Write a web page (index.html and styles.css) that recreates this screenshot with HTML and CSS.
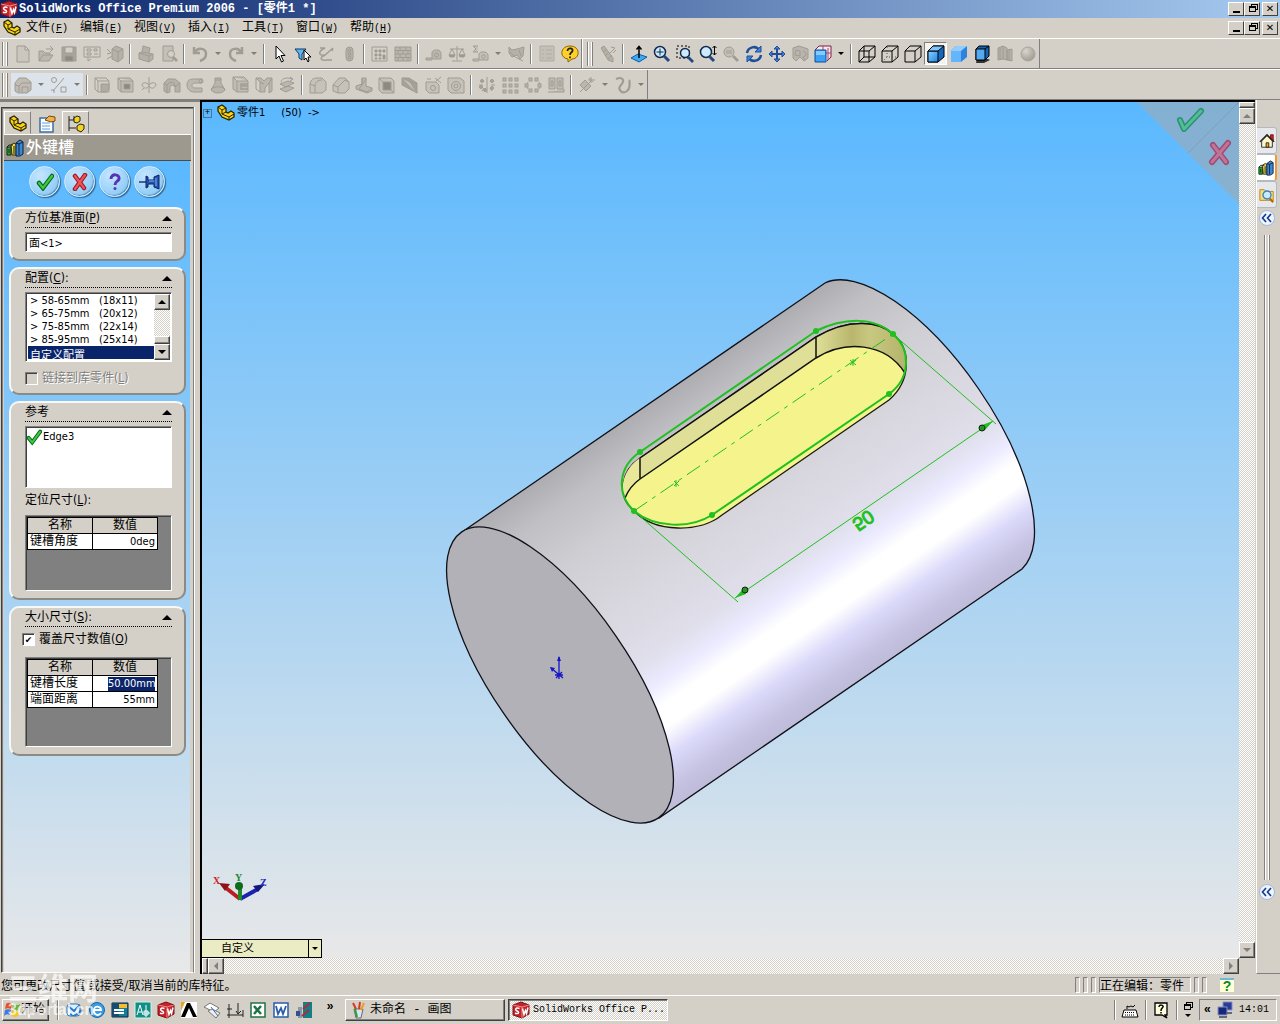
FILE: index.html
```html
<!DOCTYPE html>
<html lang="zh-CN">
<head>
    <meta charset="UTF-8">
    <meta name="viewport" content="width=device-width, initial-scale=1.0">
    <title>SolidWorks Office Premium 2006 - [零件1 *]</title>
    <link rel="stylesheet" href="styles.css">
</head>
<body>
    <svg class="sprite" aria-hidden="true">
        <defs>
            <linearGradient id="blueFace" x1="0" y1="0" x2="1" y2="1"><stop offset="0" stop-color="#8fd0ff"/><stop offset="1" stop-color="#1c86e8"/></linearGradient>
            <radialGradient id="ball" cx=".35" cy=".3" r=".8"><stop offset="0" stop-color="#d8d5cd"/><stop offset="1" stop-color="#9a968d"/></radialGradient>
        </defs>
        <!-- application -->
        <symbol id="sw" viewBox="0 0 18 18"><path d="M1 4l8-3 8 3v9l-7 4-9-3z" fill="#c3242b" stroke="#7d1014"/><path d="M1 4l9 2v11M10 6l7-2" stroke="#f08a8a"/><path d="M7.500 7.500c-4-1.500-5 1.500-2.500 2.500s2 3.500-2 2.200M10.500 7.500l1.500 6 1.500-4 1 3 1.500-6" stroke="#fff" stroke-width="1.500"/></symbol>
        <symbol id="part" viewBox="0 0 18 18"><path d="M1 3l4-2 4 3v4l2 1 3-2 3 2v4l-5 3-7-3-4-6z" fill="#f7d417" stroke="#2b2400" stroke-width="1.300"/><path d="M1 3l4 3v4l7 3v3M5 6l4-2M12 13l5-3M9 8l-4 2" stroke="#2b2400"/></symbol>
        <symbol id="books" viewBox="0 0 18 18"><path d="M1 8h4v8H1z" fill="#2fa83a" stroke="#08280b"/><path d="M5 6l3-2 2 1v11H6z" fill="#f2d544" stroke="#3a3000"/><path d="M10 4l4-3 3 2v12l-3 2h-4z" fill="#3d87d8" stroke="#06203f"/><path d="M1 8l2-2h4M3 10v4M8 7v8M13 5v11M10 4l3 1 4-2" stroke="#102030"/></symbol>
        <!-- standard toolbar -->
        <symbol id="new" viewBox="0 0 18 18"><path d="M3 1h8l4 4v12H3zM11 1v4h4" fill="#cbc7be"/></symbol>
        <symbol id="open" viewBox="0 0 18 18"><path d="M2 16V6h4l2 2h5v2M2 16l4-6h10l-4 6z" fill="#bbb7ae"/><path d="M9 4h6M13 1l3 3-3 3"/></symbol>
        <symbol id="save" viewBox="0 0 18 18"><path d="M2 2h14v14H2z" fill="#a9a59c"/><path d="M5 2h8v6H5z" fill="#d4d0c8"/><path d="M5 11h8v5H5z" fill="#8e8a82"/></symbol>
        <symbol id="drawing" viewBox="0 0 18 18"><path d="M1 2h16v10H1zM4 4h4v2H4zM4 8h4v2H4zM11 4h3v2h-3zM11 9h4M5 12v4l3-2"/></symbol>
        <symbol id="assembly" viewBox="0 0 18 18"><path d="M6 4l4-3 7 3v9l-5 4-6-3zM6 4l6 3v10M12 7l5-3" fill="#b5b1a8"/><path d="M1 4l4 4M1 9l4-1M1 14l5-3"/></symbol>
        <symbol id="print" viewBox="0 0 18 18"><path d="M5 7l1-6 7 2-1 5M2 8l3-1 11 2v5l-4 3-10-3z" fill="#b5b1a8"/><path d="M2 8l10 3v6M12 11l4-2"/></symbol>
        <symbol id="preview" viewBox="0 0 18 18"><path d="M3 1h10v15H3z" fill="#c4c0b7"/><circle cx="11" cy="9" r="3.500" fill="#d4d0c8"/><path d="M13 12l4 4" stroke-width="2.500"/></symbol>
        <symbol id="undo" viewBox="0 0 18 18"><path d="M3 2v6h6M4 7c3-5 11-4 11 2 0 4-3 6-6 7" stroke-width="2.500"/></symbol>
        <symbol id="redo" viewBox="0 0 18 18"><path d="M15 2v6H9M14 7C11 2 3 3 3 9c0 4 3 6 6 7" stroke-width="2.500"/></symbol>
        <symbol id="cursor" viewBox="0 0 18 18"><path d="M5 1v13l3-3 2.500 6 2-1-2.500-5.500h4z" fill="#fff" stroke="#000"/></symbol>
        <symbol id="filter" viewBox="0 0 18 18"><path d="M1 4h11L8 9v6l-3-2V9z" fill="#5bb8f2" stroke="#0c3766"/><path d="M10 5v10l2-2 2 4 1-1-1-4h3z" fill="#fff" stroke="#000"/></symbol>
        <symbol id="sketch" viewBox="0 0 18 18"><path d="M3 3h5c-8 4-6 8 0 7L16 3M8 10c-6 3-5 6 2 5h5M16 3l-1 3" stroke-width="1.400"/></symbol>
        <symbol id="traffic" viewBox="0 0 18 18"><rect x="6" y="2" width="7" height="14" rx="3.500" fill="#b5b1a8"/><circle cx="9.500" cy="5.500" r="1.300"/><circle cx="9.500" cy="9" r="1.300"/><circle cx="9.500" cy="12.500" r="1.300"/></symbol>
        <symbol id="grid" viewBox="0 0 18 18"><path d="M1 2h15v14H1z"/><path d="M4 5h2v2H4zM8 5h2v2H8zM12 5h2v2h-2zM4 9h2v2H4zM8 9h2v2H8zM4 13h2v1H4zM8 13h2v1H8zM12 10h2v4h-2z" fill="#9a968d"/></symbol>
        <symbol id="bricks" viewBox="0 0 18 18"><path d="M1 2h16v14H1z" fill="#bbb7ae"/><path d="M1 5.500h16M1 9h16M1 12.500h16M6 2v3M12 2v3M9 6v3M4 6v3M14 6v3M6 9v3M12 9v3M9 13v3M4 13v3M14 13v3"/></symbol>
        <symbol id="tape" viewBox="0 0 18 18"><path d="M7 14V8c0-3 3-3 5-3 3 0 4 2 4 4v5zM7 13H1v2h6" fill="#bbb7ae"/><circle cx="11.500" cy="10" r="2"/></symbol>
        <symbol id="balance" viewBox="0 0 18 18"><path d="M9 1v14M4 16h10M2 4h14M4 4l-3 6h6zM14 4l-3 6h6z"/><path d="M1 10h6l-1 2H2zM11 10h6l-1 2h-4z" fill="#9a968d"/></symbol>
        <symbol id="sigma" viewBox="0 0 18 18"><path d="M7 1H2l3 3-3 3h5M8 15V9c1-3 8-3 9 1v5zM8 14H2v2h6" fill="#c4c0b7"/><circle cx="12.500" cy="11.500" r="1.800"/></symbol>
        <symbol id="check" viewBox="0 0 18 18"><path d="M2 2l3 3 5-1 7-2-1 9-3 3-3-4-5 2-3-4z" fill="#b5b1a8"/><path d="M3 7l5 5 8 4M12 5l2 6"/></symbol>
        <symbol id="list" viewBox="0 0 18 18"><path d="M2 1h14v15H2z" fill="#c4c0b7" stroke="#b0aca3"/><path d="M4 5h2M8 5h6M4 9h2M8 9h6M4 13h2M8 13h6" stroke="#b0aca3"/></symbol>
        <symbol id="help" viewBox="0 0 18 18"><path d="M9 1c11 0 10 13 2 13l-4 3v-3C-2 13-1 1 9 1z" fill="#ffd028" stroke="#8c6400"/><path d="M6.500 6c0-4 6-3 5 0-1 2-2.500 1.500-2.500 4M9 11.500v1.800" stroke="#222" stroke-width="1.800"/></symbol>
        <!-- view toolbar -->
        <symbol id="screw" viewBox="0 0 18 18"><path d="M2 3l3-2 9 12v4l-5-2zM10 9l6-6M12 2l4 1M14 8l3-3" fill="#b5b1a8"/><path d="M4 7l4-3M6 11l4-4M9 14l4-4"/></symbol>
        <symbol id="normal" viewBox="0 0 18 18"><path d="M1 13l7-4 9 3-8 5z" fill="#3ca9f5" stroke="#0d5fa8"/><path d="M9 13V2M6.500 4.500L9 1.500l2.500 3" stroke="#000" stroke-width="1.500"/></symbol>
        <symbol id="zoomfit" viewBox="0 0 18 18"><circle cx="7" cy="7" r="5.500" fill="#cdeaff" stroke="#102a4c" stroke-width="1.500"/><path d="M7 3.500v7M3.500 7h7" stroke="#102a4c"/><path d="M11 11l5 5" stroke="#24497c" stroke-width="3"/></symbol>
        <symbol id="zoomarea" viewBox="0 0 18 18"><path d="M1 1h12v12H1z" stroke="#000" stroke-dasharray="2 2"/><circle cx="9" cy="8" r="4.500" fill="#cdeaff" stroke="#102a4c" stroke-width="1.500"/><path d="M12 12l5 5" stroke="#24497c" stroke-width="2.800"/></symbol>
        <symbol id="zoominout" viewBox="0 0 18 18"><circle cx="7" cy="7" r="5.500" fill="#cdeaff" stroke="#102a4c" stroke-width="1.500"/><path d="M10 11l5 5" stroke="#24497c" stroke-width="3"/><path d="M15.500 1v9M13.500 3l2-2 2 2M13.500 8l2 2 2-2" stroke="#000"/></symbol>
        <symbol id="zoomsel" viewBox="0 0 18 18"><circle cx="7" cy="7" r="5" fill="#c4c0b7"/><path d="M4 6h6M4 8h6"/><path d="M11 11l5 5" stroke-width="2.800"/></symbol>
        <symbol id="rotate" viewBox="0 0 18 18"><path d="M2 8c1-6 9-8 12-3M16 10c-1 6-9 8-12 3" stroke="#1f4f9a" stroke-width="2.500"/><path d="M16 1v6h-6zM2 17v-6h6z" fill="#3f83d8" stroke="#1f4f9a"/></symbol>
        <symbol id="pan" viewBox="0 0 18 18"><path d="M9 2v14M2 9h14" stroke="#1f4f9a" stroke-width="2"/><path d="M6 4l3-3 3 3zM6 14l3 3 3-3zM4 6L1 9l3 3zM14 6l3 3-3 3z" fill="#3f83d8" stroke="#1f4f9a"/></symbol>
        <symbol id="roll" viewBox="0 0 18 18"><path d="M2 3l6-2 9 3v9l-4 3-4-4-4 4-3-3z" fill="#b9b5ac"/><path d="M5 5l4 1v5l-5-1zM12 6c4 1 4 5 0 6l2 3"/></symbol>
        <symbol id="views" viewBox="0 0 18 18"><path d="M1 5l4-4h12v11l-4 4" fill="#f5e9ef" stroke="#7a2040"/><path d="M9 1v4M14 3v12M12 8h5" stroke="#b0406a"/><path d="M1 5h11v12H1z" fill="#3aa2f8" stroke="#0c4f94"/><path d="M2 6h9v4H2z" fill="#86cbff" stroke="none"/></symbol>
        <symbol id="wire" viewBox="0 0 18 18"><path d="M1 6h10v11H1zM6 1h11v11H6zM1 6l5-5M11 6l6-5M1 17l5-5M11 17l6-5" stroke="#000"/></symbol>
        <symbol id="hidvis" viewBox="0 0 18 18"><path d="M1 6h10v11H1zM1 6l5-5h11v11l-6 5M11 6l6-5" stroke="#000"/><path d="M6 2v10h10M6 12l-5 5" stroke="#555" stroke-dasharray="1 2"/></symbol>
        <symbol id="hidrem" viewBox="0 0 18 18"><path d="M1 6h10v11H1zM1 6l5-5h11v11l-6 5M11 6l6-5" stroke="#000"/></symbol>
        <symbol id="shadedge" viewBox="0 0 18 18"><path d="M1 6l5-5h11v11l-6 5H1z" fill="#1668bd" stroke="#000"/><path d="M1 6h10v11H1z" fill="url(#blueFace)" stroke="#000"/><path d="M1 6l5-5h11l-6 5z" fill="#7cc5ff" stroke="#000"/></symbol>
        <symbol id="shaded" viewBox="0 0 18 18"><path d="M1 6l5-5h11v11l-6 5H1z" fill="#2f83dd" stroke="none"/><path d="M1 6h10v11H1z" fill="#63b6fb" stroke="none"/><path d="M1 6l5-5h11l-6 5z" fill="#8fceff" stroke="none"/></symbol>
        <symbol id="shadow" viewBox="0 0 18 18"><path d="M4 14h11l2 1-6 3H3z" fill="#333" stroke="none"/><path d="M3 4l3-3h10v10l-4 4H3z" fill="#1763b4" stroke="#000"/><path d="M3 4h9v11H3zM12 4l4-3" fill="#55a9f2" stroke="#000"/></symbol>
        <symbol id="section" viewBox="0 0 18 18"><path d="M2 3l5-2v13l-5 1zM7 1l4 2v12l-4-1M11 5l5-1v12l-5-1z" fill="#b5b1a8"/><path d="M4 3v11M13 5v10"/></symbol>
        <symbol id="sphere" viewBox="0 0 18 18"><circle cx="9" cy="9" r="7" fill="url(#ball)" stroke="#aaa69d"/></symbol>
        <!-- features toolbar -->
        <symbol id="boss" viewBox="0 0 18 18"><path d="M1 15V7l4-5h7l5 4v8l-4 3H4z" fill="#c0bcb3"/><path d="M5 16v-6l3-3h9M8 16v-5h6v5M5 10l-4-1"/></symbol>
        <symbol id="curveline" viewBox="0 0 18 18"><circle cx="4" cy="4" r="2.500"/><path d="M3 15L14 2M1 14h3v3M11 11h5v5h-5z"/></symbol>
        <symbol id="extrude" viewBox="0 0 18 18"><path d="M1 2h11l3 3v11H4l-3-3zM1 2l3 3h11M4 5v11"/><path d="M7 8h8v5l-3 3H7z" fill="#b0aca3"/></symbol>
        <symbol id="cut" viewBox="0 0 18 18"><path d="M1 2h12l3 3v11H4l-3-3zM1 2l3 3h12M4 5v11" fill="#c0bcb3"/><path d="M7 8h6v5H7z" fill="#8e8a82"/></symbol>
        <symbol id="revolve" viewBox="0 0 18 18"><path d="M9 1v16M2 9c0-3 5-3 7 0 2-3 7-3 7 0M2 9c2 4 5 4 7 1 2 3 5 3 7-1M4 12l-2 2"/></symbol>
        <symbol id="sweep" viewBox="0 0 18 18"><path d="M1 7l4-4h7l5 4v9h-5v-5c-1-2-4-2-5 0v5l-3 1-3-2z" fill="#b5b1a8"/><path d="M1 7l3 2v8M4 9c3-4 8-4 8 2M12 11l5-4"/></symbol>
        <symbol id="cshape" viewBox="0 0 18 18"><path d="M16 3H8C2 3 1 6 1 9s2 7 7 7h8v-4H9c-4 0-4-5 0-5h7z" fill="#bdb9b0"/><circle cx="15" cy="5" r="2"/></symbol>
        <symbol id="loft" viewBox="0 0 18 18"><path d="M6 2h6v5l4 7c-3 4-11 4-14 0l4-7z" fill="#b9b5ac"/><path d="M6 4h6M2 13c4-3 10-3 14 0"/></symbol>
        <symbol id="slab" viewBox="0 0 18 18"><path d="M1 1h11l4 4v11H5l-4-3zM1 1l4 4h11M5 5v11" fill="#c0bcb3"/><path d="M16 8H9v2h7M16 13H9v-2" stroke-width="1.500"/></symbol>
        <symbol id="rib" viewBox="0 0 18 18"><path d="M1 2h5l3 3 3-3h5v13l-3 2V7l-4 5v4H5V6L1 2z" fill="#bbb7ae"/><path d="M5 6l4 2M14 7l3-5M1 2v11l4 3"/></symbol>
        <symbol id="swap" viewBox="0 0 18 18"><path d="M2 8l8-3 6 2-8 4zM2 13l8-3 6 2-8 4z" fill="#bbb7ae"/><path d="M3 6c1-4 6-5 11-3M12 1l3 2-3 2"/></symbol>
        <symbol id="fillet" viewBox="0 0 18 18"><path d="M1 8c1-5 4-6 7-6h5l4 4v8l-4 3H1z" fill="#c6c2b9"/><path d="M1 8l5 2v7M6 10c0-4 3-6 7-6"/></symbol>
        <symbol id="chamfer" viewBox="0 0 18 18"><path d="M1 9l6-7h6l4 4v7l-4 4H6l-5-2z" fill="#c6c2b9"/><path d="M6 17v-6l7-7M1 9l5 2M13 4l4 2"/></symbol>
        <symbol id="ribs" viewBox="0 0 18 18"><path d="M7 2h4v8l6 2v3l-5 2-11-4v-3l6-2z" fill="#bbb7ae"/><path d="M11 3L4 13l8 3 5-4M7 2v7"/></symbol>
        <symbol id="shell" viewBox="0 0 18 18"><path d="M1 2h12l3 3v12H4l-3-3z" fill="#c6c2b9"/><path d="M5 6h8v8H5z" fill="#8e8a82"/><path d="M1 2l4 4M16 17l-3-3"/></symbol>
        <symbol id="draft" viewBox="0 0 18 18"><path d="M1 2h7l8 5v10L1 9z" fill="#a5a198"/><path d="M1 2l8 4 7 11M9 6l7 1" fill="#c6c2b9"/></symbol>
        <symbol id="wizard" viewBox="0 0 18 18"><path d="M2 6h10l3 3v8H5l-3-3z" fill="#c6c2b9"/><circle cx="9" cy="12" r="2.500"/><path d="M11 2l6 5M17 1l-5 4M3 3h4"/></symbol>
        <symbol id="hole" viewBox="0 0 18 18"><path d="M1 2h12l4 3v12H4l-3-3z" fill="#c6c2b9"/><circle cx="9" cy="10" r="4.500"/><circle cx="9" cy="10" r="2"/></symbol>
        <symbol id="circpat" viewBox="0 0 18 18"><path d="M9 1v16M1 9h4M13 9h4M4 3l2 3M14 3l-2 3M4 15l2-3M14 15l-2-3"/><g fill="#aaa69d"><circle cx="4" cy="5" r="1.500"/><circle cx="14" cy="5" r="1.500"/><circle cx="3" cy="11" r="1.500"/><circle cx="14" cy="12" r="1.500"/><circle cx="7" cy="14" r="1.500"/></g></symbol>
        <symbol id="linpat" viewBox="0 0 18 18"><g fill="#bbb7ae"><rect x="2" y="2" width="3" height="3"/><rect x="8" y="2" width="3" height="3"/><rect x="14" y="2" width="3" height="3"/><rect x="2" y="8" width="3" height="3"/><rect x="8" y="8" width="3" height="3"/><rect x="14" y="8" width="3" height="3"/><rect x="2" y="14" width="3" height="3"/><rect x="8" y="14" width="3" height="3"/><rect x="14" y="14" width="3" height="3"/></g></symbol>
        <symbol id="ringpat" viewBox="0 0 18 18"><g fill="#bbb7ae"><rect x="5" y="2" width="3" height="3"/><rect x="11" y="2" width="3" height="3"/><rect x="14" y="8" width="3" height="3"/><rect x="11" y="13" width="3" height="3"/><rect x="5" y="13" width="3" height="3"/><rect x="1" y="8" width="3" height="3"/></g><path d="M4 6l-1 2M15 6l1 2M4 13l-1-2M15 13l1-2"/></symbol>
        <symbol id="mirror" viewBox="0 0 18 18"><path d="M2 2h6v11H2zM10 2h6v11h-6zM1 16h16v-3" fill="#c0bcb3"/><path d="M4 5h2v5H4zM12 5h2v5h-2z"/></symbol>
        <symbol id="refgeo" viewBox="0 0 18 18"><path d="M2 9l5-5 6 6-5 5zM2 16L14 4M13 1v6M10 4h7M11 2l4 4" fill="#bbb7ae"/></symbol>
        <symbol id="curve" viewBox="0 0 18 18"><path d="M2 3c7-3 9 2 5 6s1 10 6 6 1-9 3-11" stroke-width="2.200"/></symbol>
        <!-- panels -->
        <symbol id="props" viewBox="0 0 18 18"><path d="M2 3h13v14H2z" fill="#fff" stroke="#3b6ea8" stroke-width="1.500"/><path d="M4 8h8M4 11h8M4 14h8" stroke="#5aa0e0"/><path d="M7 5l4-4 6 1v4l-4 1z" fill="#f0b04a" stroke="#7a4a10"/></symbol>
        <symbol id="config" viewBox="0 0 18 18"><path d="M2 1v15M2 5h5M2 13h7M7 1v4" stroke="#222"/><path d="M7 3l3-2 3 1v4l-3 2-3-1zM10 11l3-2 4 1v4l-3 3-4-2z" fill="#f7d417" stroke="#222"/></symbol>
        <symbol id="ok" viewBox="0 0 18 18"><path d="M3 10l4 5 9-12" stroke="#08661b" stroke-width="4.500" stroke-linecap="round"/><path d="M3 10l4 5 9-12" stroke="#3ecb42" stroke-width="2.200" stroke-linecap="round"/></symbol>
        <symbol id="cancel" viewBox="0 0 18 18"><path d="M4 3l9 12M14 2L4 16" stroke="#9a1a22" stroke-width="4.500" stroke-linecap="round"/><path d="M4 3l9 12M14 2L4 16" stroke="#f0525a" stroke-width="2.200" stroke-linecap="round"/></symbol>
        <symbol id="what" viewBox="0 0 18 18"><path d="M5 6c0-6 9-5 8 0-1 3-4 2-4 6" stroke="#5733b5" stroke-width="3"/><circle cx="9" cy="15.500" r="1.500" fill="#5733b5" stroke="none"/></symbol>
        <symbol id="pin" viewBox="0 0 22 18"><path d="M0 9h8" stroke="#163a78" stroke-width="1.500"/><path d="M7 3l2 1v3h6V4l5-2v14l-5-2v-3H9v3l-2 1z" fill="#2454b4" stroke="#0d2460"/><path d="M10 8h5M17 5v8" stroke="#7fb0f0"/></symbol>
        <symbol id="home" viewBox="0 0 18 18"><path d="M13 7V2h3v8" fill="#d22" stroke="#711"/><path d="M3 9v7h12V9L9 3z" fill="#fff6c8" stroke="#222"/><path d="M1 10l8-8 8 8" stroke="#222" stroke-width="1.500"/><path d="M8 11h3v5H8z" fill="#e9a520" stroke="#222"/></symbol>
        <symbol id="search" viewBox="0 0 18 18"><path d="M1 3h5l2 2h8v10H1z" fill="#f8dc7a" stroke="#b08410"/><circle cx="9" cy="9" r="4.500" fill="#c8ebff" stroke="#3d7fc4" stroke-width="1.500"/><path d="M12 13l4 4" stroke="#b06a10" stroke-width="2.500"/></symbol>
        <symbol id="chevrons" viewBox="0 0 18 18"><circle cx="9" cy="9" r="7.500" fill="#edf4ff" stroke="#a5b9d8"/><path d="M8 5L4.500 9 8 13M13 5L9.500 9l3.500 4" stroke="#123a8c" stroke-width="1.600"/></symbol>
        <!-- taskbar -->
        <symbol id="flag" viewBox="0 0 18 18"><path d="M3 3c2-2 4-1 6 0L8 8C6 7 4 7 2 8z" fill="#e8502a" stroke="none"/><path d="M10 3c2 1 4 2 7 0l-1 6c-3 1-5 0-7-1z" fill="#6cb83a" stroke="none"/><path d="M2 9c2-1 4-1 6 0l-1 5c-2-1-4-1-6 1z" fill="#3a7be0" stroke="none"/><path d="M9 9c2 1 4 2 7 1l-1 5c-3 2-5 1-7-1z" fill="#f5c426" stroke="none"/></symbol>
        <symbol id="mail" viewBox="0 0 18 18"><rect x="2" y="3" width="13" height="12" rx="3" fill="#dceeff" stroke="#2876c4"/><path d="M3 5l6 5 6-6M5 13c4 3 9 0 11-4" stroke="#2876c4" stroke-width="2"/></symbol>
        <symbol id="ie" viewBox="0 0 18 18"><circle cx="9" cy="9" r="7.500" fill="#3a9be0" stroke="#1568ae"/><path d="M13 12c-3 4-8 1-7-3 0-5 7-4 7 0H6" stroke="#fff" stroke-width="1.800"/></symbol>
        <symbol id="media" viewBox="0 0 18 18"><path d="M1 2h16v14H1z" fill="#177d9a" stroke="#124"/><path d="M1 2h7v14H1z" fill="#174c72" stroke="none"/><path d="M8 3h8v4H8z" fill="#f4bd31" stroke="none"/><path d="M3 9h10M3 12h10" stroke="#fff" stroke-width="1.800"/></symbol>
        <symbol id="caxa" viewBox="0 0 18 18"><path d="M1 1h16v16H1z" fill="#0e8f88" stroke="#d8f0ee"/><path d="M3 14l3-10 3 10M4 11h4M10 10h4v4h-4zM12 4v12M10 12h6" stroke="#fff"/></symbol>
        <symbol id="lambda" viewBox="0 0 18 18"><path d="M1 1h16v16H1z" fill="#fff" stroke="none"/><path d="M1 16L7 2h3l7 14h-4L9 7l-4 9z" fill="#000" stroke="none"/><path d="M1 10L5 1H1z" fill="#e9a520" stroke="none"/></symbol>
        <symbol id="pages" viewBox="0 0 18 18"><path d="M1 6l6-4 9 5-5 4z" fill="#fff" stroke="#777"/><path d="M5 10l4-2 8 4-4 5z" fill="#eee" stroke="#777"/><path d="M8 6l7 9" stroke="#2876c4"/></symbol>
        <symbol id="measure" viewBox="0 0 18 18"><path d="M3 3v14M1 8h5M1 14h16M12 2v10M10 10l2 3 3-3M17 9v7" stroke="#222"/></symbol>
        <symbol id="excel" viewBox="0 0 18 18"><path d="M2 2h14v14H2z" fill="#fff" stroke="#207245" stroke-width="1.500"/><path d="M5 5l7 8M12 5l-7 8" stroke="#207245" stroke-width="2.500"/></symbol>
        <symbol id="word" viewBox="0 0 18 18"><path d="M2 2h14v14H2z" fill="#fff" stroke="#2a5caa" stroke-width="1.500"/><path d="M4 5l2 8 3-6 2 6 3-8" stroke="#2a5caa" stroke-width="1.800"/></symbol>
        <symbol id="tower" viewBox="0 0 18 18"><path d="M3 6h4v11H3z" fill="#8b97a8" stroke="none"/><path d="M8 1h9v16H8z" fill="#147d85" stroke="none"/><path d="M1 10h4v5H1z" fill="#31528c" stroke="none"/><path d="M8 8l7-6M7 15l7-6" stroke="#b02a3a" stroke-width="2"/></symbol>
        <symbol id="paint" viewBox="0 0 18 18"><path d="M5 8h9l-2 9H7z" fill="#d9e4ec" stroke="#667"/><path d="M7 8L4 2M10 8l1-7" stroke="#d43a22" stroke-width="2"/><path d="M12 9l3-7" stroke="#e8a020" stroke-width="2"/><path d="M8 16l-2-8" stroke="#2da13a" stroke-width="2"/></symbol>
        <symbol id="keyboard" viewBox="0 0 18 18"><path d="M3 9h12l2 7H1z" fill="#fff" stroke="#000"/><path d="M4 11.500h10M4 14h10" stroke="#000" stroke-dasharray="1 1"/><path d="M6 8V5l2 1 2-1 2 1 2-2" stroke="#000"/></symbol>
        <symbol id="note" viewBox="0 0 18 18"><path d="M3 2h12v12h-2l2 3-5-3H3z" fill="#ffffdc" stroke="#000" stroke-width="1.300"/><path d="M7 6c0-3 5-2 4 0-1 2-2 1-2 4M9 11v1.500" stroke="#000" stroke-width="1.500"/></symbol>
        <symbol id="network" viewBox="0 0 18 18"><path d="M7 1h9v8H7z" fill="#2a3c98" stroke="#8290c0"/><path d="M2 6h9v8H2z" fill="#16287c" stroke="#8290c0"/><path d="M3 16h8M11 12h5" stroke="#667" stroke-width="2"/></symbol>
    </svg>

    <header class="title-bar">
        <svg class="icon"><use href="#sw"/></svg>
        <h1>SolidWorks Office Premium 2006 - [零件1 *]</h1>
        <div class="window-buttons">
            <button aria-label="最小化"><i class="glyph-min"></i></button>
            <button aria-label="还原"><i class="glyph-restore"></i></button>
            <button class="close" aria-label="关闭"><i class="glyph-close">✕</i></button>
        </div>
    </header>

    <nav class="menu-bar">
        <svg class="icon"><use href="#part"/></svg>
        <button>文件<span>(<u>F</u>)</span></button>
        <button>编辑<span>(<u>E</u>)</span></button>
        <button>视图<span>(<u>V</u>)</span></button>
        <button>插入<span>(<u>I</u>)</span></button>
        <button>工具<span>(<u>T</u>)</span></button>
        <button>窗口<span>(<u>W</u>)</span></button>
        <button>帮助<span>(<u>H</u>)</span></button>
        <div class="window-buttons">
            <button aria-label="最小化文档"><i class="glyph-min"></i></button>
            <button aria-label="还原文档"><i class="glyph-restore"></i></button>
            <button class="close" aria-label="关闭文档"><i class="glyph-close">✕</i></button>
        </div>
    </nav>

    <div class="toolbar-row">
        <div class="toolbar">
            <i class="grip"></i>
            <button class="tool" aria-label="新建"><svg class="icon"><use href="#new"/></svg></button>
            <button class="tool" aria-label="打开"><svg class="icon"><use href="#open"/></svg></button>
            <button class="tool" aria-label="保存"><svg class="icon"><use href="#save"/></svg></button>
            <button class="tool" aria-label="工程图"><svg class="icon"><use href="#drawing"/></svg></button>
            <button class="tool" aria-label="装配体"><svg class="icon"><use href="#assembly"/></svg></button>
            <i class="sep"></i>
            <button class="tool" aria-label="打印"><svg class="icon"><use href="#print"/></svg></button>
            <button class="tool" aria-label="打印预览"><svg class="icon"><use href="#preview"/></svg></button>
            <i class="sep"></i>
            <button class="tool" aria-label="撤销"><svg class="icon"><use href="#undo"/></svg></button>
            <button class="drop" aria-label="撤销列表"></button>
            <button class="tool" aria-label="重做"><svg class="icon"><use href="#redo"/></svg></button>
            <button class="drop" aria-label="重做列表"></button>
            <i class="sep"></i>
            <button class="tool" aria-label="选择"><svg class="icon"><use href="#cursor"/></svg></button>
            <button class="tool" aria-label="选择过滤器"><svg class="icon"><use href="#filter"/></svg></button>
            <button class="tool" aria-label="草图"><svg class="icon"><use href="#sketch"/></svg></button>
            <button class="tool" aria-label="重建模型"><svg class="icon"><use href="#traffic"/></svg></button>
            <i class="sep"></i>
            <button class="tool" aria-label="网格"><svg class="icon"><use href="#grid"/></svg></button>
            <button class="tool" aria-label="纹理"><svg class="icon"><use href="#bricks"/></svg></button>
            <i class="sep"></i>
            <button class="tool" aria-label="测量"><svg class="icon"><use href="#tape"/></svg></button>
            <button class="tool" aria-label="质量特性"><svg class="icon"><use href="#balance"/></svg></button>
            <button class="tool" aria-label="方程式"><svg class="icon"><use href="#sigma"/></svg></button>
            <button class="drop" aria-label="更多"></button>
            <button class="tool" aria-label="检查"><svg class="icon"><use href="#check"/></svg></button>
            <i class="sep"></i>
            <button class="tool" aria-label="选项"><svg class="icon"><use href="#list"/></svg></button>
            <button class="tool" aria-label="帮助"><svg class="icon"><use href="#help"/></svg></button>
        </div>
        <div class="toolbar">
            <i class="grip"></i>
            <button class="tool" aria-label="上一视图"><svg class="icon"><use href="#screw"/></svg></button>
            <i class="sep"></i>
            <button class="tool" aria-label="正视于"><svg class="icon"><use href="#normal"/></svg></button>
            <button class="tool" aria-label="整屏显示全图"><svg class="icon"><use href="#zoomfit"/></svg></button>
            <button class="tool" aria-label="局部放大"><svg class="icon"><use href="#zoomarea"/></svg></button>
            <button class="tool" aria-label="放大或缩小"><svg class="icon"><use href="#zoominout"/></svg></button>
            <button class="tool" aria-label="放大所选范围"><svg class="icon"><use href="#zoomsel"/></svg></button>
            <button class="tool" aria-label="旋转视图"><svg class="icon"><use href="#rotate"/></svg></button>
            <button class="tool" aria-label="平移"><svg class="icon"><use href="#pan"/></svg></button>
            <button class="tool" aria-label="翻滚"><svg class="icon"><use href="#roll"/></svg></button>
            <button class="tool" aria-label="标准视图"><svg class="icon"><use href="#views"/></svg></button>
            <button class="drop dark" aria-label="标准视图列表"></button>
            <i class="sep"></i>
            <button class="tool" aria-label="线架图"><svg class="icon"><use href="#wire"/></svg></button>
            <button class="tool" aria-label="隐藏线可见"><svg class="icon"><use href="#hidvis"/></svg></button>
            <button class="tool" aria-label="消除隐藏线"><svg class="icon"><use href="#hidrem"/></svg></button>
            <button class="tool pressed" aria-label="带边线上色"><svg class="icon"><use href="#shadedge"/></svg></button>
            <button class="tool" aria-label="上色"><svg class="icon"><use href="#shaded"/></svg></button>
            <button class="tool" aria-label="阴影"><svg class="icon"><use href="#shadow"/></svg></button>
            <button class="tool" aria-label="剖面视图"><svg class="icon"><use href="#section"/></svg></button>
            <button class="tool" aria-label="真实视图"><svg class="icon"><use href="#sphere"/></svg></button>
        </div>
    </div>

    <div class="toolbar-row">
        <div class="toolbar">
            <i class="grip"></i>
            <div class="tool-group">
                <button class="tool" aria-label="特征"><svg class="icon"><use href="#boss"/></svg></button>
                <button class="drop" aria-label="特征列表"></button>
                <button class="tool" aria-label="草图工具"><svg class="icon"><use href="#curveline"/></svg></button>
                <button class="drop" aria-label="草图列表"></button>
            </div>
            <i class="sep"></i>
            <button class="tool" aria-label="拉伸凸台"><svg class="icon"><use href="#extrude"/></svg></button>
            <button class="tool" aria-label="拉伸切除"><svg class="icon"><use href="#cut"/></svg></button>
            <button class="tool" aria-label="旋转"><svg class="icon"><use href="#revolve"/></svg></button>
            <button class="tool" aria-label="旋转切除"><svg class="icon"><use href="#sweep"/></svg></button>
            <button class="tool" aria-label="扫描"><svg class="icon"><use href="#cshape"/></svg></button>
            <button class="tool" aria-label="放样"><svg class="icon"><use href="#loft"/></svg></button>
            <button class="tool" aria-label="扫描切除"><svg class="icon"><use href="#slab"/></svg></button>
            <button class="tool" aria-label="放样切除"><svg class="icon"><use href="#rib"/></svg></button>
            <button class="tool" aria-label="移动"><svg class="icon"><use href="#swap"/></svg></button>
            <i class="sep"></i>
            <button class="tool" aria-label="圆角"><svg class="icon"><use href="#fillet"/></svg></button>
            <button class="tool" aria-label="倒角"><svg class="icon"><use href="#chamfer"/></svg></button>
            <button class="tool" aria-label="筋"><svg class="icon"><use href="#ribs"/></svg></button>
            <button class="tool" aria-label="抽壳"><svg class="icon"><use href="#shell"/></svg></button>
            <button class="tool" aria-label="拔模"><svg class="icon"><use href="#draft"/></svg></button>
            <button class="tool" aria-label="异型孔向导"><svg class="icon"><use href="#wizard"/></svg></button>
            <button class="tool" aria-label="孔"><svg class="icon"><use href="#hole"/></svg></button>
            <i class="sep"></i>
            <button class="tool" aria-label="曲线阵列"><svg class="icon"><use href="#circpat"/></svg></button>
            <button class="tool" aria-label="线性阵列"><svg class="icon"><use href="#linpat"/></svg></button>
            <button class="tool" aria-label="圆周阵列"><svg class="icon"><use href="#ringpat"/></svg></button>
            <button class="tool" aria-label="镜向"><svg class="icon"><use href="#mirror"/></svg></button>
            <i class="sep"></i>
            <button class="tool" aria-label="参考几何体"><svg class="icon"><use href="#refgeo"/></svg></button>
            <button class="drop" aria-label="参考几何体列表"></button>
            <button class="tool" aria-label="曲线"><svg class="icon"><use href="#curve"/></svg></button>
            <button class="drop" aria-label="曲线列表"></button>
        </div>
    </div>

    <main class="workspace">
        <aside class="manager">
            <div class="manager-frame">
                <div class="tabs">
                    <button class="tab" aria-label="特征树"><svg class="icon"><use href="#part"/></svg></button>
                    <button class="tab active" aria-label="属性"><svg class="icon"><use href="#props"/></svg></button>
                    <button class="tab" aria-label="配置"><svg class="icon"><use href="#config"/></svg></button>
                </div>
                <h2 class="manager-title"><svg class="icon"><use href="#books"/></svg>外键槽</h2>
                <div class="manager-body">
                    <div class="actions">
                        <button class="round" aria-label="确定"><svg class="icon"><use href="#ok"/></svg></button>
                        <button class="round" aria-label="取消"><svg class="icon"><use href="#cancel"/></svg></button>
                        <button class="round" aria-label="帮助"><svg class="icon"><use href="#what"/></svg></button>
                        <button class="round" aria-label="保持可见"><svg class="icon wide"><use href="#pin"/></svg></button>
                    </div>

                    <section class="group">
                        <h3><label for="plane">方位基准面(<u>P</u>)</label></h3>
                        <input class="field" id="plane" type="text" value="面&lt;1&gt;">
                    </section>

                    <section class="group">
                        <h3><label for="config-list">配置(<u>C</u>):</label></h3>
                        <div class="listbox">
                            <select id="config-list" size="5">
                                <option>&gt; 58-65mm&nbsp;&nbsp; (18x11)</option>
                                <option>&gt; 65-75mm&nbsp;&nbsp; (20x12)</option>
                                <option>&gt; 75-85mm&nbsp;&nbsp; (22x14)</option>
                                <option>&gt; 85-95mm&nbsp;&nbsp; (25x14)</option>
                                <option selected>自定义配置</option>
                            </select>
                            <div class="scroll vertical">
                                <i class="scroll-btn up"></i>
                                <i class="thumb"></i>
                                <i class="scroll-btn down"></i>
                            </div>
                        </div>
                        <label class="check-row disabled"><input type="checkbox" disabled><span>链接到库零件(<u>L</u>)</span></label>
                    </section>

                    <section class="group">
                        <h3>参考</h3>
                        <ul class="references">
                            <li><svg class="icon"><use href="#ok"/></svg>Edge3</li>
                        </ul>
                        <p class="caption">定位尺寸(<u>L</u>):</p>
                        <div class="table-box">
                            <table>
                                <tr><th>名称</th><th>数值</th></tr>
                                <tr><td>键槽角度</td><td>0deg</td></tr>
                            </table>
                        </div>
                    </section>

                    <section class="group">
                        <h3><span>大小尺寸(<u>S</u>):</span></h3>
                        <label class="check-row outdent"><input type="checkbox" checked><span>覆盖尺寸数值(<u>O</u>)</span></label>
                        <div class="table-box tall">
                            <table>
                                <tr><th>名称</th><th>数值</th></tr>
                                <tr><td>键槽长度</td><td class="editing"><input type="text" value="50.00mm" aria-label="键槽长度"></td></tr>
                                <tr><td>端面距离</td><td>55mm</td></tr>
                            </table>
                        </div>
                    </section>
                </div>
            </div>
        </aside>

        <section class="document">
            <div class="canvas">
                <svg class="model" viewBox="202 102 1037 856">
                    <defs>
                        <linearGradient id="body" gradientUnits="userSpaceOnUse" x1="461" y1="532" x2="657" y2="818">
                            <stop offset="0" stop-color="#adacb0"/>
                            <stop offset=".1" stop-color="#c0bfc3"/>
                            <stop offset=".25" stop-color="#cfced3"/>
                            <stop offset=".45" stop-color="#d9d8e0"/>
                            <stop offset=".6" stop-color="#dfdeea"/>
                            <stop offset=".68" stop-color="#ebeaff"/>
                            <stop offset=".74" stop-color="#ffffff"/>
                            <stop offset=".8" stop-color="#ffffff"/>
                            <stop offset=".87" stop-color="#dcdafa"/>
                            <stop offset=".95" stop-color="#c5c2e2"/>
                            <stop offset="1" stop-color="#bfbcda"/>
                        </linearGradient>
                        <linearGradient id="endWall">
                            <stop offset="0" stop-color="#e0df98"/>
                            <stop offset=".4" stop-color="#b9b76e"/>
                            <stop offset=".6" stop-color="#c9c880"/>
                            <stop offset="1" stop-color="#b5b46c"/>
                        </linearGradient>
                    </defs>
                    <g stroke="#101018" stroke-width="1.300">
                        <path d="M462 532L825 283A174 71 55.400 0 1 1022 569L659 818z" fill="url(#body)"/>
                        <ellipse cx="560" cy="675" rx="173.600" ry="68.200" transform="rotate(55.400 560 675)" fill="#b2b1b8"/>
                    </g>
                    <!-- keyway pocket -->
                    <path d="M640 458L816 337C850 317 880 322 893 334C911 348 912 380 889 400L722 515C700 533 655 533 634 511C615 495 622 470 640 458z" fill="#f4f38c" stroke="#1a1a10" stroke-width="1.300"/>
                    <path d="M640 458L816 337V358L640 479z" fill="#e0df98"/>
                    <path d="M640 458C626 467 619 484 625 498Q630 486 640 479z" fill="#e9e89a"/>
                    <path d="M816 337C850 317 880 322 893 334Q908 350 905 373C885 342 845 340 816 358z" fill="url(#endWall)"/>
                    <path d="M640 458L816 337C850 317 880 322 893 334M625 498Q630 486 640 479L816 358C845 340 885 342 905 373M816 337v21M640 458v21" fill="none" stroke="#101010" stroke-width="1.500"/>
                    <g fill="none" stroke="#1fc01f" stroke-width="2">
                        <path d="M640 452L816 331C845 317 875 317 893 334C911 350 911 378 889 394L712 515C690 529 655 528 634 511C615 493 619 466 640 452z"/>
                        <path d="M634 511L893 334" stroke-width="1" stroke-dasharray="16 6 4 6"/>
                        <path d="M893 334L996 424M634 511L738 602M735 598L993 421M850 360l6 5M850 365l6-5M853 359v7M674 481l5 5M674 486l5-5M676 480v7" stroke-width="1"/>
                    </g>
                    <g fill="#1fc01f">
                        <circle cx="640" cy="452" r="3"/><circle cx="816" cy="331" r="3"/><circle cx="893" cy="334" r="3"/>
                        <circle cx="889" cy="394" r="3"/><circle cx="712" cy="515" r="3"/><circle cx="634" cy="511" r="3"/>
                        <path d="M735 598l8-9 3 5zM993 421l-11 4 3 5z"/>
                    </g>
                    <circle cx="745" cy="590" r="3" fill="#2a8f2a" stroke="#062806"/>
                    <circle cx="982" cy="428" r="3" fill="#2a8f2a" stroke="#062806"/>
                    <text class="dimension" transform="translate(863 520) rotate(-34) scale(1 -1)" x="0" y="6">50</text>
                    <!-- origin -->
                    <path d="M559 679v-22M563 678l-12-10M555 675h8M556 678l6-6" stroke="#1414c8" stroke-width="1.300" fill="none"/>
                    <path d="M557 661l2-5 2 5zM550 667l5 1-3 4z" fill="#1414c8"/>
                    <!-- axis triad -->
                    <g stroke-width="4">
                        <path d="M240 899L226 888" stroke="#b81e22"/><path d="M219 883l11 1-5 7z" fill="#8c1418"/>
                        <path d="M240 899L258 889" stroke="#1a22b0"/><path d="M265 884l-12 2 5 6z" fill="#10187c"/>
                        <path d="M240 900V886" stroke="#1f8a2a"/><circle cx="239" cy="886" r="4" fill="#0f6a1c"/>
                    </g>
                    <g class="axis">
                        <text x="213" y="884" fill="#d02028">X</text>
                        <text x="235" y="881" fill="#208a30">Y</text>
                        <text x="260" y="886" fill="#2028c0">Z</text>
                    </g>
                </svg>

                <div class="tree">
                    <button class="expand" aria-label="展开">+</button>
                    <svg class="icon"><use href="#part"/></svg>
                    <span>零件1</span><span>(50)&nbsp; -&gt;</span>
                </div>

                <svg class="confirm-corner" viewBox="0 0 102 102">
                    <path d="M0 0h102v102z" fill="#9aabb8" fill-opacity=".65"/>
                    <path d="M51 51L102 0" stroke="#7fa0bd"/>
                    <g fill="none" stroke-linecap="round" stroke-linejoin="round">
                        <path d="M43 18l4 9 17-18" stroke="#2c9076" stroke-width="6"/>
                        <path d="M43 18l4 9 17-18" stroke="#52bd95" stroke-width="3"/>
                        <path d="M76 43l13 17M91 41L75 60" stroke="#a04a72" stroke-width="6"/>
                        <path d="M76 43l13 17M91 41L75 60" stroke="#c07498" stroke-width="3"/>
                    </g>
                </svg>

                <button class="view-picker"><span>自定义</span><i></i></button>
            </div>

            <div class="scroll vertical right-bar">
                <i class="splitter"></i>
                <i class="scroll-btn up muted"></i>
                <i class="scroll-btn down muted"></i>
            </div>
            <div class="scroll horizontal">
                <i class="splitter"></i>
                <i class="scroll-btn left muted"></i>
                <i class="scroll-btn right muted"></i>
            </div>
        </section>

        <aside class="task-pane">
            <button class="pane-tab" aria-label="资源"><svg class="icon"><use href="#home"/></svg></button>
            <button class="pane-tab active" aria-label="设计库"><svg class="icon"><use href="#books"/></svg></button>
            <button class="pane-tab" aria-label="文件探索器"><svg class="icon"><use href="#search"/></svg></button>
            <button class="expander" aria-label="展开"><svg class="icon"><use href="#chevrons"/></svg></button>
            <i class="pane-grip"></i>
            <button class="expander" aria-label="展开"><svg class="icon"><use href="#chevrons"/></svg></button>
        </aside>
    </main>

    <div class="status-bar">
        <p>您可更改尺寸值 或接受/取消当前的库特征。</p>
        <div class="cells">
            <i></i><i></i><i></i>
            <span>正在编辑：零件</span>
            <i></i><i></i>
        </div>
        <b class="quick-tip">?</b>
    </div>

    <footer class="taskbar">
        <button class="start"><svg class="icon"><use href="#flag"/></svg>开始</button>
        <i class="sep"></i>
        <div class="quick-launch">
            <button class="tool" aria-label="邮件"><svg class="icon"><use href="#mail"/></svg></button>
            <button class="tool" aria-label="浏览器"><svg class="icon"><use href="#ie"/></svg></button>
            <button class="tool" aria-label="媒体"><svg class="icon"><use href="#media"/></svg></button>
            <button class="tool" aria-label="电子图板"><svg class="icon"><use href="#caxa"/></svg></button>
            <button class="tool" aria-label="SolidWorks"><svg class="icon"><use href="#sw"/></svg></button>
            <button class="tool" aria-label="分析"><svg class="icon"><use href="#lambda"/></svg></button>
            <button class="tool" aria-label="文档"><svg class="icon"><use href="#pages"/></svg></button>
            <button class="tool" aria-label="标注"><svg class="icon"><use href="#measure"/></svg></button>
            <button class="tool" aria-label="Excel"><svg class="icon"><use href="#excel"/></svg></button>
            <button class="tool" aria-label="Word"><svg class="icon"><use href="#word"/></svg></button>
            <button class="tool" aria-label="工具"><svg class="icon"><use href="#tower"/></svg></button>
            <button class="more">»</button>
        </div>
        <button class="task"><svg class="icon"><use href="#paint"/></svg>未命名 - 画图</button>
        <button class="task current"><svg class="icon"><use href="#sw"/></svg>SolidWorks Office P...</button>
        <div class="tray">
            <i class="sep"></i>
            <button class="tool" aria-label="键盘"><svg class="icon"><use href="#keyboard"/></svg></button>
            <i class="sep"></i>
            <button class="tool" aria-label="提示"><svg class="icon"><use href="#note"/></svg></button>
            <i class="sep"></i>
            <button class="lang" aria-label="语言栏选项"><i class="glyph-restore"></i><i class="caret"></i></button>
            <div class="clock"><span>«</span><svg class="icon"><use href="#network"/></svg><time>14:01</time></div>
        </div>
    </footer>

    <div class="watermark" aria-hidden="true">
        <span>三维网</span>
        <small>3dportal.cn</small>
    </div>
</body>
</html>
```

FILE: styles.css
```css
:root {
    --face: #d4d0c8;
    --light: #ffffff;
    --shadow: #808080;
    --dark: #404040;
    --navy: #0a246a;
    --sky: linear-gradient(#5ab8ff, #e8e8e8);
    --checker: repeating-conic-gradient(#ffffff 0 25%, #d4d0c8 0 50%) 0 0 / 2px 2px;
    --mono: "Liberation Mono", "Noto Sans CJK SC", monospace;
    --sans: "DejaVu Sans Condensed", "Noto Sans CJK SC", sans-serif;
}

* {
    margin: 0;
    padding: 0;
    box-sizing: border-box;
}

body {
    display: flex;
    flex-direction: column;
    height: 100vh;
    overflow: hidden;
    background: var(--face);
    color: #000;
    font: 12px/16px var(--mono);
}

button {
    background: none;
    border: none;
    color: inherit;
    font: inherit;
}

.sprite {
    position: absolute;
    width: 0;
    height: 0;
}

.icon {
    width: 18px;
    height: 18px;
    flex: none;
    fill: none;
    stroke: #a09c93;
}

.icon.wide {
    width: 22px;
}

/* title and menu */
.title-bar {
    display: flex;
    align-items: center;
    height: 18px;
    background: linear-gradient(90deg, #0a246a, #a6caf0);
    color: #fff;
}

.title-bar h1 {
    margin-left: 1px;
    font-size: 12px;
    line-height: 18px;
}

.menu-bar {
    display: flex;
    align-items: center;
    height: 20px;
    padding-left: 3px;
}

.menu-bar > button {
    width: 54px;
    padding-right: 2px;
    line-height: 18px;
    white-space: nowrap;
}

.menu-bar span {
    font-size: 10px;
}

.window-buttons {
    display: flex;
    margin-left: auto;
    padding-right: 2px;
    color: #000;
}

.window-buttons button {
    display: flex;
    align-items: center;
    justify-content: center;
    width: 16px;
    height: 14px;
    background: var(--face);
    border: 1px solid;
    border-color: var(--light) var(--dark) var(--dark) var(--light);
}

.window-buttons .close {
    margin-left: 2px;
}

.glyph-min {
    width: 7px;
    height: 8px;
    border-bottom: 2px solid #000;
}

.glyph-restore {
    width: 7px;
    height: 6px;
    border: 1px solid #000;
    border-top-width: 2px;
    box-shadow: 2px -2px 0 -1px var(--face), 2px -2px 0 #000;
}

.glyph-close {
    font: bold 10px/10px "DejaVu Sans", sans-serif;
}

/* toolbars */
.toolbar-row {
    display: flex;
    height: 31px;
    border-top: 1px solid var(--light);
    border-bottom: 1px solid var(--shadow);
}

.toolbar {
    display: flex;
    align-items: center;
    padding-left: 2px;
    border-right: 1px solid var(--shadow);
}

.toolbar + .toolbar {
    padding-left: 4px;
    border-left: 1px solid var(--light);
}

.grip {
    width: 6px;
    height: 24px;
    margin-right: 3px;
    border: solid var(--shadow);
    border-width: 0 1px;
    box-shadow: inset 1px 0 var(--light), inset -1px 0 var(--light);
}

.tool {
    display: flex;
    align-items: center;
    justify-content: center;
    width: 23px;
    height: 23px;
    flex: none;
}

.pressed {
    background: #f4f3f0;
    border: 1px solid;
    border-color: var(--shadow) var(--light) var(--light) var(--shadow);
}

.drop {
    width: 13px;
    height: 23px;
    color: #807c74;
}

.drop.dark {
    color: #000;
}

.drop::after,
.caret {
    content: "";
    display: block;
    width: 0;
    margin: auto;
    border: 3px solid transparent;
    border-top-color: currentColor;
    border-bottom: none;
}

.sep {
    width: 2px;
    height: 20px;
    margin: 0 3px;
    flex: none;
    border-left: 1px solid var(--shadow);
    border-right: 1px solid var(--light);
}

.tool-group {
    display: flex;
    background: #dde3ea;
}

/* workspace */
.workspace {
    display: flex;
    flex: 1;
    min-height: 0;
}

.manager {
    display: flex;
    width: 200px;
    flex: none;
    padding: 5px 6px 1px 1px;
    border-top: 2px solid var(--shadow);
    font-family: var(--sans);
}

.manager-frame {
    display: flex;
    flex: 1;
    flex-direction: column;
    border: 1px solid;
    border-color: var(--dark) var(--shadow) var(--light) var(--dark);
    box-shadow: inset 1px 1px var(--shadow), 1px 0 var(--light);
    padding: 1px 2px 0;
}

.tabs {
    display: flex;
    height: 26px;
    padding-top: 2px;
    border-bottom: 1px solid var(--light);
}

.tab {
    width: 27px;
    padding: 3px 2px;
    border: 1px solid;
    border-color: var(--light) var(--shadow) transparent var(--light);
}

.tab.active {
    width: 31px;
    background: var(--face);
    border-color: transparent;
}

.manager-title {
    display: flex;
    align-items: center;
    height: 26px;
    padding-left: 2px;
    gap: 2px;
    background: #9d998f;
    border-bottom: 1px solid #4c4a46;
    color: #fff;
    font-size: 16px;
    font-weight: 500;
}

.manager-body {
    display: flex;
    flex: 1;
    flex-direction: column;
    gap: 6px;
    padding: 5px 4px 0 5px;
    background: var(--sky);
    border-right: 1px solid var(--face);
}

.actions {
    display: flex;
    gap: 4px;
    height: 35px;
    padding-left: 20px;
}

.round {
    display: flex;
    align-items: center;
    justify-content: center;
    width: 31px;
    height: 31px;
    border-radius: 50%;
    background: radial-gradient(circle at 35% 30%, #c4e6ff, #7cc2f4);
    border: 1px solid #d8efff;
    box-shadow: 1px 1px 1px #33638c, inset -1px -1px 1px #5a8fb8;
}

.group {
    padding: 0 12px 7px 14px;
    background: var(--face);
    border: 2px solid;
    border-color: #f8f8f6 #8c8a84 #8c8a84 #f8f8f6;
    border-radius: 10px;
}

.group h3 {
    display: flex;
    align-items: center;
    justify-content: space-between;
    height: 19px;
    margin-bottom: 4px;
    border-bottom: 1px dotted #000;
    font-size: 12px;
    font-weight: normal;
}

.group h3::after {
    content: "";
    border: 5px solid transparent;
    border-top: none;
    border-bottom-color: #000;
}

.field,
.listbox,
.references,
.table-box {
    display: flex;
    width: 100%;
    background: #fff;
    border: 1px solid;
    border-color: var(--shadow) var(--light) var(--light) var(--shadow);
    box-shadow: inset 1px 1px var(--dark);
}

.field {
    height: 20px;
    padding: 0 3px;
    font: 11px/16px var(--sans);
}

.listbox {
    height: 70px;
    padding: 1px 1px 1px 2px;
}

.listbox select {
    flex: 1;
    min-width: 0;
    border: none;
    outline: none;
    overflow: hidden;
    background: #fff;
    color: #000;
    font: 11px/13px var(--sans);
}

.listbox option {
    height: 13px;
    min-height: 13px;
    padding: 0 2px;
    line-height: 13px;
}

.listbox option:checked {
    background: linear-gradient(var(--navy), var(--navy));
    color: #fff;
    line-height: 11px;
    -webkit-text-fill-color: #fff;
}

.check-row {
    display: flex;
    align-items: center;
    gap: 4px;
    height: 16px;
    margin-top: 8px;
}

.check-row.outdent {
    margin: 3px 0 10px -3px;
}

.check-row.disabled {
    color: var(--shadow);
    text-shadow: 1px 1px var(--light);
}

.check-row input {
    appearance: none;
    width: 13px;
    height: 13px;
    background: #fff;
    border: 1px solid;
    border-color: var(--shadow) var(--light) var(--light) var(--shadow);
    box-shadow: inset 1px 1px var(--dark);
}

.check-row input:disabled {
    background: var(--face);
}

.check-row input:checked::before {
    content: "✔";
    display: block;
    font: 9px/12px "DejaVu Sans", sans-serif;
    text-align: center;
}

.references {
    height: 62px;
    padding: 1px 0;
    list-style: none;
    font-size: 11px;
}

.references li {
    display: flex;
    align-items: center;
    height: 18px;
}

.references .icon {
    width: 16px;
    margin-right: 1px;
}

.caption {
    margin: 4px 0 7px;
}

.table-box {
    height: 76px;
    padding: 1px;
    background: #808080;
}

.table-box.tall {
    height: 90px;
}

table {
    align-self: flex-start;
    border-collapse: collapse;
}

th,
td {
    width: 65px;
    height: 16px;
    border: 1px solid #000;
    line-height: 15px;
    white-space: nowrap;
}

th {
    background: var(--face);
    font-weight: normal;
}

td {
    background: #fff;
    padding-left: 2px;
}

td:last-child {
    padding-right: 2px;
    font-size: 11px;
    text-align: right;
}

.editing input {
    display: block;
    width: 47px;
    height: 14px;
    margin-left: auto;
    background: var(--navy);
    border: none;
    color: #fff;
    font: 11px/14px var(--sans);
    text-align: right;
}

/* scroll bars */
.scroll {
    display: flex;
    background: var(--checker);
}

.scroll.vertical {
    flex-direction: column;
    width: 16px;
}

.scroll-btn,
.splitter,
.thumb {
    display: flex;
    align-items: center;
    justify-content: center;
    flex: none;
    background: var(--face);
    border: 1px solid;
    border-color: var(--light) var(--dark) var(--dark) var(--light);
    box-shadow: inset -1px -1px var(--shadow);
}

.scroll-btn {
    width: 16px;
    height: 16px;
}

.scroll-btn::after {
    content: "";
    border: 4px solid transparent;
}

.up::after { border-top: none; border-bottom-color: #000; }
.down::after { border-bottom: none; border-top-color: #000; }
.left::after { border-left: none; border-right-color: #000; }
.right::after { border-right: none; border-left-color: #000; }

.muted.up::after { border-bottom-color: var(--shadow); }
.muted.down::after { border-top-color: var(--shadow); }
.muted.left::after { border-right-color: var(--shadow); }
.muted.right::after { border-left-color: var(--shadow); }

.thumb {
    height: 8px;
    margin-top: auto;
}

.right-bar .down {
    margin-top: auto;
}

.horizontal .right {
    margin-left: auto;
}

.right-bar .splitter {
    height: 6px;
}

.horizontal .splitter {
    width: 6px;
}

/* graphics area */
.document {
    display: grid;
    flex: 1;
    grid-template: minmax(0, 1fr) 16px / minmax(0, 1fr) 16px;
    border: solid #000;
    border-width: 2px 0 0 2px;
}

.canvas {
    position: relative;
    background: var(--sky);
}

.model {
    position: absolute;
    inset: 0;
    width: 100%;
    height: 100%;
}

.dimension {
    fill: #1fc01f;
    stroke: #1fc01f;
    font: 19px "Liberation Sans", sans-serif;
    text-anchor: middle;
}

.axis {
    font: bold 10px "Liberation Serif", serif;
}

.tree {
    position: absolute;
    top: 2px;
    left: 1px;
    display: flex;
    align-items: center;
    font-family: var(--sans);
    font-size: 11px;
}

.tree .icon {
    margin: 0 2px 0 5px;
}

.tree span {
    margin-right: 16px;
}

.expand {
    width: 9px;
    height: 9px;
    border: 1px solid #4a7896;
    font: 9px/6px var(--mono);
}

.confirm-corner {
    position: absolute;
    top: 0;
    right: 0;
    width: 102px;
}

.view-picker {
    position: absolute;
    bottom: 0;
    left: 0;
    display: flex;
    width: 120px;
    height: 19px;
    background: #ececc4;
    border: 1px solid #000;
    border-left: none;
    font-size: 11px;
    line-height: 18px;
}

.view-picker span {
    flex: 1;
    padding-right: 54px;
    text-align: right;
}

.view-picker i {
    display: flex;
    align-items: center;
    justify-content: center;
    width: 13px;
    height: 100%;
    border-left: 1px solid #000;
}

.view-picker i::after {
    content: "";
    border: 3px solid transparent;
    border-top-color: #000;
    border-bottom: none;
}

.task-pane {
    display: flex;
    flex-direction: column;
    width: 24px;
    margin-left: 1px;
    padding-top: 27px;
    border-left: 1px solid var(--light);
    border-bottom: 1px solid var(--shadow);
}

.pane-tab {
    width: 20px;
    height: 27px;
    padding-top: 4px;
    background: #e6e8ec;
    border: 1px solid #b4b8c0;
    border-left: none;
    border-radius: 0 3px 3px 0;
}

.pane-tab .icon {
    width: 16px;
}

.pane-tab.active {
    background: #fff;
    border-right: 2px solid #f0963c;
}

.expander {
    width: 20px;
    height: 20px;
    padding-top: 1px;
}

.pane-grip {
    flex: 1;
    width: 6px;
    margin: 7px 7px 2px;
    border: solid var(--shadow);
    border-width: 0 1px;
    box-shadow: inset 1px 0 var(--light), inset -1px 0 var(--light);
}

.task-pane .expander:last-child {
    margin-bottom: 71px;
}

/* status bar and taskbar */
.status-bar {
    display: flex;
    align-items: center;
    height: 21px;
    padding: 0 46px 0 1px;
    font-family: "Noto Sans CJK SC", sans-serif;
}

.cells {
    display: flex;
    gap: 3px;
    margin-left: auto;
}

.cells i,
.cells span {
    height: 16px;
    min-width: 5px;
    border: 1px solid;
    border-color: var(--shadow) var(--light) var(--light) var(--shadow);
    line-height: 14px;
}

.cells span {
    padding-right: 6px;
}

.quick-tip {
    width: 14px;
    height: 14px;
    margin-left: 13px;
    background: #ffffd8;
    border-top: 2px solid #6fb8d8;
    color: #0c8a1c;
    font: bold 14px/12px "Liberation Sans", sans-serif;
    text-align: center;
}

.taskbar {
    display: flex;
    align-items: center;
    height: 29px;
    padding: 0 3px 0 2px;
    border-top: 1px solid var(--light);
}

.start,
.task {
    display: flex;
    align-items: center;
    height: 22px;
    border: 1px solid;
    border-color: var(--light) var(--dark) var(--dark) var(--light);
    box-shadow: inset -1px -1px var(--shadow);
    white-space: nowrap;
}

.start {
    width: 47px;
    margin-right: 5px;
}

.quick-launch {
    display: flex;
    align-items: center;
    width: 283px;
}

.more {
    margin: 0 auto;
    padding-bottom: 6px;
    font-weight: bold;
}

.task {
    width: 160px;
    margin-right: 3px;
    padding: 0 3px;
    gap: 3px;
}

.task.current {
    background: var(--checker);
    border-color: var(--dark) var(--light) var(--light) var(--dark);
    box-shadow: inset 1px 1px var(--shadow);
    font-size: 10px;
}

.tray {
    display: flex;
    align-items: center;
    margin-left: auto;
}

.lang {
    display: flex;
    flex-direction: column;
    align-items: center;
    gap: 4px;
    width: 14px;
    margin-right: 4px;
}

.clock {
    display: flex;
    align-items: center;
    gap: 5px;
    height: 22px;
    padding: 0 7px 0 4px;
    border: 1px solid;
    border-color: var(--shadow) var(--light) var(--light) var(--shadow);
}

.clock time {
    font-size: 10px;
}

.clock span {
    font-weight: bold;
}

/* site mark over the bottom left corner */
.watermark {
    position: absolute;
    bottom: 5px;
    left: 8px;
    color: #fff;
    opacity: .7;
    pointer-events: none;
}

.watermark span,
.watermark small {
    display: block;
}

.watermark span {
    font: bold 30px/30px "Noto Sans CJK SC", sans-serif;
}

.watermark small {
    font: bold 16px/18px "Liberation Sans", sans-serif;
}
```
